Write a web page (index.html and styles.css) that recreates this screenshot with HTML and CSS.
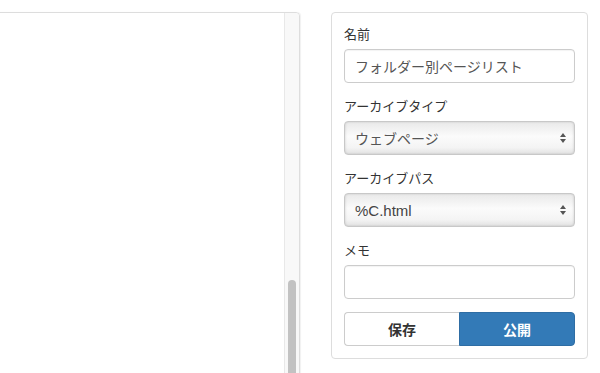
FILE: index.html
```html
<!DOCTYPE html>
<html lang="ja">
<head>
    <meta charset="UTF-8">
    <title>アーカイブ設定</title>
    <link rel="stylesheet" href="styles.css">
</head>
<body>
    <div class="page">
        <div class="preview-panel">
            <div class="preview-body"></div>
            <div class="scroll-track">
                <div class="scroll-thumb"></div>
            </div>
        </div>

        <form class="settings-panel">
            <div class="field">
                <label>名前</label>
                <input class="text-input" type="text" value="フォルダー別ページリスト">
            </div>
            <div class="field">
                <label>アーカイブタイプ</label>
                <div class="select-box">
                    <span>ウェブページ</span>
                    <svg class="arrows" width="6" height="12" viewBox="0 0 6 12">
                        <path d="M3 1 L6 5 L0 5 Z" fill="#555"/>
                        <path d="M3 11 L6 7 L0 7 Z" fill="#555"/>
                    </svg>
                </div>
            </div>
            <div class="field">
                <label>アーカイブパス</label>
                <div class="select-box">
                    <span class="latin">%C.html</span>
                    <svg class="arrows" width="6" height="12" viewBox="0 0 6 12">
                        <path d="M3 1 L6 5 L0 5 Z" fill="#555"/>
                        <path d="M3 11 L6 7 L0 7 Z" fill="#555"/>
                    </svg>
                </div>
            </div>
            <div class="field">
                <label>メモ</label>
                <input class="text-input" type="text" value="">
            </div>
            <div class="btn-group">
                <button type="button" class="btn btn-default">保存</button>
                <button type="button" class="btn btn-primary">公開</button>
            </div>
        </form>
    </div>
</body>
</html>
```

FILE: styles.css
```css
/* General */
html, body {
    margin: 0;
    padding: 0;
    height: 100%;
    overflow: hidden;
    background: #fff;
    font-family: "Noto Sans CJK JP", "Liberation Sans", sans-serif;
    color: #333;
}

.page {
    display: flex;
    align-items: flex-start;
    gap: 31px;
    padding-top: 12px;
}

/* Left preview panel */
.preview-panel {
    display: flex;
    width: 301px;
    height: 420px;
    margin-left: -1px;
    border: 1px solid #ddd;
    border-radius: 0 4px 0 0;
    box-shadow: 1px 0 1px rgba(0, 0, 0, 0.06);
    box-sizing: border-box;
}

.preview-body {
    flex: 1;
}

.scroll-track {
    width: 15px;
    background: #f8f8f8;
    border-left: 1px solid #e8e8e8;
    border-top-right-radius: 4px;
    padding-top: 267px;
    display: flex;
    justify-content: center;
    box-sizing: border-box;
}

.scroll-thumb {
    width: 8px;
    height: 200px;
    background: #c2c2c2;
    border-radius: 4px;
}

/* Right settings panel */
.settings-panel {
    width: 257px;
    margin: 0;
    padding: 12px;
    border: 1px solid #ddd;
    border-radius: 4px;
    box-sizing: border-box;
    display: flex;
    flex-direction: column;
    gap: 14px;
}

.field {
    display: flex;
    flex-direction: column;
}

.field label {
    font-size: 13px;
    line-height: 18px;
    margin-bottom: 6px;
    color: #333;
}

.text-input {
    height: 34px;
    padding: 0 10px;
    border: 1px solid #ccc;
    border-radius: 4px;
    font-family: "Noto Sans CJK JP", sans-serif;
    font-size: 14px;
    color: #555;
    box-sizing: border-box;
    box-shadow: inset 0 1px 1px rgba(0, 0, 0, 0.05);
    outline: none;
}

.select-box {
    height: 34px;
    padding: 0 8px 0 10px;
    border: 1px solid #c8c8c8;
    border-radius: 4px;
    box-sizing: border-box;
    display: flex;
    align-items: center;
    justify-content: space-between;
    font-size: 14px;
    color: #555;
    background: linear-gradient(#e9e9e9, #fbfbfb 45%, #f4f4f4 80%, #e2e2e2);
    box-shadow: inset 1px 0 2px rgba(0, 0, 0, 0.08), inset -1px 0 2px rgba(0, 0, 0, 0.08);
}

.select-box .latin {
    font-family: "Liberation Sans", sans-serif;
    font-size: 15px;
    color: #444;
}

/* Buttons */
.btn-group {
    display: flex;
    margin-top: -1px;
}

.btn {
    flex: 1;
    height: 34px;
    font-family: "Noto Sans CJK JP", sans-serif;
    font-size: 14px;
    font-weight: bold;
    cursor: pointer;
    box-sizing: border-box;
}

.btn-default {
    background: #fff;
    color: #333;
    border: 1px solid #ccc;
    border-right: none;
    border-radius: 4px 0 0 4px;
}

.btn-primary {
    background: #337ab7;
    color: #fff;
    border: 1px solid #2e6da4;
    border-radius: 0 4px 4px 0;
}
```
